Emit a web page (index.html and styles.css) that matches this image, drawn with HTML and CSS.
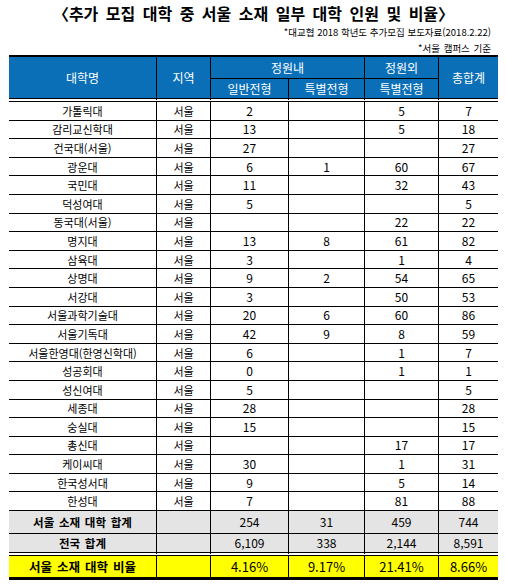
FILE: index.html
```html
<!DOCTYPE html>
<html lang="ko">
<head>
    <meta charset="UTF-8">
    <meta name="viewport" content="width=device-width, initial-scale=1.0">
    <title>추가 모집 대학 중 서울 소재 일부 대학 인원 및 비율</title>
    <link rel="stylesheet" href="styles.css">
</head>
<body>
    <div class="page">
        <h1 class="title">〈추가 모집 대학 중 서울 소재 일부 대학 인원 및 비율〉</h1>
        <p class="note source">*대교협 2018 학년도 추가모집 보도자료(2018.2.22)</p>
        <p class="note basis">*서울 캠퍼스 기준</p>

        <table class="quota">
            <colgroup>
                <col class="c-name">
                <col class="c-area">
                <col class="c-general">
                <col class="c-special">
                <col class="c-extra">
                <col class="c-total">
            </colgroup>
            <thead>
                <tr class="head-top">
                    <th rowspan="2" class="split">대학명</th>
                    <th rowspan="2" class="split">지역</th>
                    <th colspan="2">정원내</th>
                    <th>정원외</th>
                    <th rowspan="2" class="split">총합계</th>
                </tr>
                <tr class="head-sub">
                    <th class="split">일반전형</th>
                    <th class="split">특별전형</th>
                    <th class="split">특별전형</th>
                </tr>
            </thead>
            <tbody>
                <tr><td>가톨릭대</td><td>서울</td><td class="num">2</td><td class="num"></td><td class="num">5</td><td class="num">7</td></tr>
                <tr><td>감리교신학대</td><td>서울</td><td class="num">13</td><td class="num"></td><td class="num">5</td><td class="num">18</td></tr>
                <tr><td>건국대(서울)</td><td>서울</td><td class="num">27</td><td class="num"></td><td class="num"></td><td class="num">27</td></tr>
                <tr><td>광운대</td><td>서울</td><td class="num">6</td><td class="num">1</td><td class="num">60</td><td class="num">67</td></tr>
                <tr><td>국민대</td><td>서울</td><td class="num">11</td><td class="num"></td><td class="num">32</td><td class="num">43</td></tr>
                <tr><td>덕성여대</td><td>서울</td><td class="num">5</td><td class="num"></td><td class="num"></td><td class="num">5</td></tr>
                <tr><td>동국대(서울)</td><td>서울</td><td class="num"></td><td class="num"></td><td class="num">22</td><td class="num">22</td></tr>
                <tr><td>명지대</td><td>서울</td><td class="num">13</td><td class="num">8</td><td class="num">61</td><td class="num">82</td></tr>
                <tr><td>삼육대</td><td>서울</td><td class="num">3</td><td class="num"></td><td class="num">1</td><td class="num">4</td></tr>
                <tr><td>상명대</td><td>서울</td><td class="num">9</td><td class="num">2</td><td class="num">54</td><td class="num">65</td></tr>
                <tr><td>서강대</td><td>서울</td><td class="num">3</td><td class="num"></td><td class="num">50</td><td class="num">53</td></tr>
                <tr><td>서울과학기술대</td><td>서울</td><td class="num">20</td><td class="num">6</td><td class="num">60</td><td class="num">86</td></tr>
                <tr><td>서울기독대</td><td>서울</td><td class="num">42</td><td class="num">9</td><td class="num">8</td><td class="num">59</td></tr>
                <tr><td>서울한영대(한영신학대)</td><td>서울</td><td class="num">6</td><td class="num"></td><td class="num">1</td><td class="num">7</td></tr>
                <tr><td>성공회대</td><td>서울</td><td class="num">0</td><td class="num"></td><td class="num">1</td><td class="num">1</td></tr>
                <tr><td>성신여대</td><td>서울</td><td class="num">5</td><td class="num"></td><td class="num"></td><td class="num">5</td></tr>
                <tr><td>세종대</td><td>서울</td><td class="num">28</td><td class="num"></td><td class="num"></td><td class="num">28</td></tr>
                <tr><td>숭실대</td><td>서울</td><td class="num">15</td><td class="num"></td><td class="num"></td><td class="num">15</td></tr>
                <tr><td>총신대</td><td>서울</td><td class="num"></td><td class="num"></td><td class="num">17</td><td class="num">17</td></tr>
                <tr><td>케이씨대</td><td>서울</td><td class="num">30</td><td class="num"></td><td class="num">1</td><td class="num">31</td></tr>
                <tr><td>한국성서대</td><td>서울</td><td class="num">9</td><td class="num"></td><td class="num">5</td><td class="num">14</td></tr>
                <tr><td>한성대</td><td>서울</td><td class="num">7</td><td class="num"></td><td class="num">81</td><td class="num">88</td></tr>
            </tbody>
            <tfoot>
                <tr class="sum seoul">
                    <td class="label">서울 소재 대학 합계</td><td></td><td class="num">254</td><td class="num">31</td><td class="num">459</td><td class="num">744</td>
                </tr>
                <tr class="sum nation">
                    <td class="label">전국 합계</td><td></td><td class="num">6,109</td><td class="num">338</td><td class="num">2,144</td><td class="num">8,591</td>
                </tr>
                <tr class="ratio">
                    <td class="label">서울 소재 대학 비율</td><td></td><td>4.16%</td><td>9.17%</td><td>21.41%</td><td>8.66%</td>
                </tr>
            </tfoot>
        </table>
    </div>
</body>
</html>
```

FILE: styles.css
```css
body {
    margin: 0;
    font-family: "Noto Sans CJK KR", "Noto Sans", sans-serif;
    color: #000;
    background-color: #fff;
}
.page {
    padding: 0 7px 0 9px;
}
.title {
    margin: 0;
    padding-top: 2px;
    font-size: 16px;
    line-height: 22px;
    font-weight: bold;
    text-align: center;
    word-spacing: 3px;
}
.note {
    margin: 0;
    padding-right: 7px;
    text-align: right;
    font-size: 9.5px;
}
.source {
    line-height: 16px;
}
.basis {
    margin-top: 1px;
    line-height: 14px;
    word-spacing: 1px;
}
.quota {
    width: 489px;
    table-layout: fixed;
    border-collapse: separate;
    border-spacing: 0;
    border-top: 2px solid #000;
    border-bottom: 3px solid #000;
}
.c-name { width: 148px; }
.c-area { width: 54px; }
.c-general { width: 78px; }
.c-special { width: 76px; }
.c-extra { width: 74px; }
.c-total { width: 59px; }
.quota th,
.quota td {
    padding: 0;
    border-right: 1px solid #000;
    border-bottom: 1px solid #000;
    text-align: center;
    vertical-align: middle;
    white-space: nowrap;
}
.quota td {
    font-size: 11px;
    line-height: 14px;
}
.quota td.num {
    font-size: 12px;
}
.quota tr > :last-child {
    border-right: none;
}
.quota th {
    background-color: #0b6fb8;
    background-clip: padding-box;
    color: #fff;
    font-size: 12px;
    font-weight: normal;
    line-height: 16px;
}
.quota .head-sub > :last-child {
    border-right: 1px solid #000;
}
.quota th.split {
    border-bottom: 4px double #000;
}
.head-top {
    height: 22px;
}
.head-sub {
    height: 23px;
}
.quota tbody tr {
    height: 18.6px;
}
.sum td {
    background-color: #e4e4e4;
    background-clip: padding-box;
}
.sum .label {
    font-size: 11.5px;
    font-weight: bold;
    word-spacing: 1.5px;
}
.seoul {
    height: 23px;
}
.nation {
    height: 22px;
}
.nation td {
    border-bottom: 4px double #000;
}
.ratio {
    height: 21px;
}
.ratio td {
    background-color: #ffff00;
    border-bottom: none;
    font-size: 13px;
}
.ratio .label {
    font-size: 12.5px;
    font-weight: bold;
    word-spacing: 1.5px;
}
```
